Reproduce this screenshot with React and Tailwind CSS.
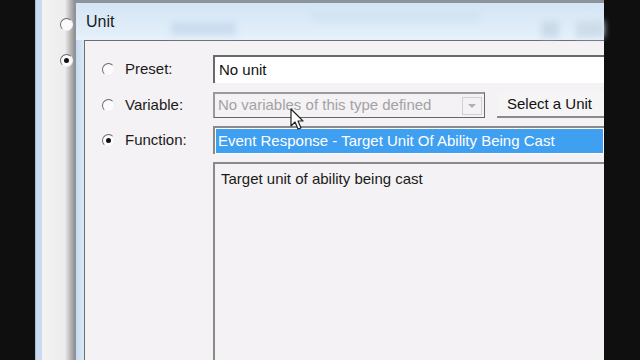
import React from "react";

function Radio({ checked }) {
  return (
    <div className="w-[13px] h-[13px] rounded-full bg-[#fbfbfb] border border-t-[#6a6a6a] border-l-[#6a6a6a] border-r-[#f0f0f0] border-b-[#f0f0f0] flex items-center justify-center shrink-0">
      {checked && <div className="w-[5px] h-[5px] rounded-full bg-[#111]" />}
    </div>
  );
}

function Row({ label, checked, children }) {
  return (
    <div className="flex items-center">
      <div className="w-[128px] flex items-center gap-[10px] pl-[17px]">
        <Radio checked={checked} />
        <span className="text-[15px] text-[#1a1a1a]">{label}</span>
      </div>
      <div className="flex-1 flex items-center">{children}</div>
    </div>
  );
}

export default function App() {
  return (
    <div className="w-[640px] h-[360px] bg-[#0f0f0f] flex overflow-hidden relative font-['Liberation_Sans',Arial,sans-serif]">
      {/* left black strip */}
      <div className="w-[35px] shrink-0" />

      {/* window behind */}
      <div className="w-[40px] shrink-0 flex">
        <div className="w-[7px] bg-[#c9dbf1] border-l border-[#a9bcd4]" />
        <div className="flex-1 bg-gradient-to-r from-[#f3f3f3] via-[#ececec] via-70% to-[#8e8e8e] flex flex-col pt-[18px] gap-[23px] overflow-hidden">
          <div className="ml-[18px]">
            <Radio />
          </div>
          <div className="ml-[18px]">
            <Radio checked />
          </div>
        </div>
      </div>

      {/* dialog */}
      <div className="w-[529px] shrink-0 flex flex-col border-t-[3px] border-l border-[#8d939b] bg-[#d9e8f6]">
        <div className="h-[37px] relative bg-gradient-to-b from-[#d4e5f5] to-[#e5f1fb] flex items-center pl-[10px]">
          <span className="text-[16px] text-[#1b1b1b]">Unit</span>
          <div className="absolute left-[95px] top-[19px] w-[65px] h-[13px] bg-[#cadcee] blur-[3px]" />
          <div className="absolute left-[235px] top-[8px] w-[170px] h-[10px] bg-[#d2e3f3] blur-[3px]" />
          <div className="absolute left-[465px] top-[18px] w-[18px] h-[16px] bg-[#cbdae8] blur-[3px]" />
          <div className="absolute left-[500px] top-[18px] w-[28px] h-[16px] bg-[#cedcea] blur-[3px]" />
        </div>
        <div className="flex-1 flex">
          <div className="w-[8px] bg-gradient-to-r from-[#c7daf0] to-[#dce9f7]" />
          <div className="flex-1 border-l border-t border-[#6e6e6e] bg-[#f4f2f4] flex flex-col pt-[14px] gap-[8px]">
            <Row label="Preset:">
              <div className="flex-1 h-[28px] bg-white border-l-2 border-t-2 border-[#6a6a6a] flex items-center pl-[4px]">
                <span className="text-[15px] text-[#111]">No unit</span>
              </div>
            </Row>
            <div className="mt-[1px]">
              <Row label="Variable:">
                <div className="w-[272px] h-[26px] border-l-2 border-t-2 border-[#9a9a9a] border-r border-b border-r-[#666] border-b-[#666] bg-[#f4f2f4] flex items-center pl-[3px] pr-[2px]">
                  <span className="flex-1 text-[15px] text-[#a3a3a3] whitespace-nowrap overflow-hidden">No variables of this type defined</span>
                  <div className="w-[20px] h-[18px] border border-[#d0d0d0] flex items-center justify-center shrink-0">
                    <div className="w-0 h-0 border-l-[4px] border-r-[4px] border-t-[4px] border-l-transparent border-r-transparent border-t-[#b0b0b0]" />
                  </div>
                </div>
                <div className="ml-[12px] flex-1 h-[26px] bg-[#f6f5f6] border-b-2 border-[#8a8a8a] flex items-center pl-[10px]">
                  <span className="text-[15px] text-[#111] whitespace-nowrap">Select a Unit</span>
                </div>
              </Row>
            </div>
            <Row label="Function:" checked>
              <div className="flex-1 h-[28px] border-l-2 border-t-2 border-[#8a8a8a] bg-white p-[1px] flex">
                <div className="flex-1 bg-[#3f9ff0] flex items-center pl-[2px] overflow-hidden">
                  <span className="text-[15px] text-white whitespace-nowrap">Event Response - Target Unit Of Ability Being Cast</span>
                </div>
              </div>
            </Row>
            <div className="flex flex-1">
              <div className="w-[128px]" />
              <div className="flex-1 border-l-2 border-t-2 border-[#8a8a8a] bg-[#f4f2f4] pl-[6px] pt-[3px]">
                <span className="text-[15px] text-[#1a1a1a]">Target unit of ability being cast</span>
              </div>
            </div>
          </div>
        </div>
      </div>

      {/* right black strip */}
      <div className="flex-1" />

      {/* mouse pointer */}
      <svg className="absolute left-[290px] top-[108px]" width="16" height="24" viewBox="0 0 16 24">
        <path d="M1 1 L1 18 L5 14 L8 21 L11 20 L8 13 L13 13 Z" fill="#fff" stroke="#222" strokeWidth="1.2" strokeLinejoin="round" />
      </svg>
    </div>
  );
}
